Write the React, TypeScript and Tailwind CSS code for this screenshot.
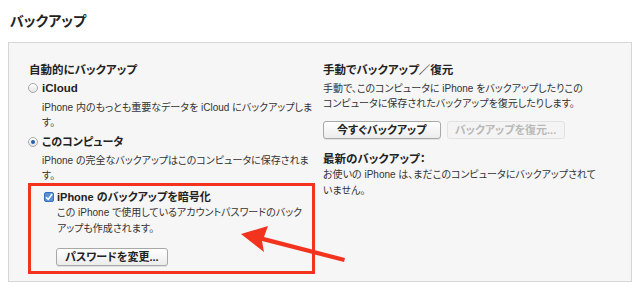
const jp = { fontFamily: '"Liberation Sans", "Noto Sans CJK JP", sans-serif' };

function Radio({ checked }: { checked?: boolean }) {
  return (
    <span className="inline-flex h-[10px] w-[10px] items-center justify-center rounded-full border border-[#a9a9a9] bg-gradient-to-b from-white to-[#e4e4e4]">
      {checked && <span className="h-[4px] w-[4px] rounded-full bg-[#2a5db0]" />}
    </span>
  );
}

function Button({ children, disabled, tight }: { children: React.ReactNode; disabled?: boolean; tight?: boolean }) {
  if (disabled) {
    return (
      <button className="h-[18px] w-[118px] rounded-[3px] border border-[#e2e2e2] bg-[#f4f4f4] text-[11px] font-bold text-[#b9b9b9]">
        {children}
      </button>
    );
  }
  return (
    <button
      className={
        (tight ? "px-[8px] " : "px-[13px] ") +
        "h-[18px] rounded-[3px] border border-[#a8a8a8] bg-gradient-to-b from-white to-[#ececec] text-[11px] font-bold text-[#222] shadow-[0_1px_0_rgba(0,0,0,0.08)]"
      }
    >
      {children}
    </button>
  );
}

export default function App() {
  return (
    <div
      className="relative h-[300px] w-[640px] overflow-hidden bg-white text-[#222] [font-feature-settings:'palt']"
      style={jp}
    >
      <h1 className="pl-[10px] pt-[12px] text-[14px] font-bold leading-[18px]">バックアップ</h1>

      <div className="mx-[8px] mt-[12px] grid h-[240px] grid-cols-[295px_1fr] border border-[#d6d6d6] bg-[#f6f6f6] pl-[19px] pt-[19px] whitespace-nowrap">
        {/* left column */}
        <div className="flex flex-col">
          <div className="pl-[1px] text-[11.5px] font-bold leading-[16px]">自動的にバックアップ</div>

          <div className="mt-[2px] flex items-center gap-[4px]">
            <Radio />
            <span className="text-[11.5px] font-bold leading-[16px]">iCloud</span>
          </div>
          <p className="pl-[14px] pt-[4px] text-[10px] leading-[15px] text-[#333]">
            iPhone 内のもっとも重要なデータを iCloud にバックアップしま
            <br />す。
          </p>

          <div className="mt-[4px] flex items-center gap-[4px]">
            <Radio checked />
            <span className="text-[11px] font-bold leading-[16px]">このコンピュータ</span>
          </div>
          <p className="pl-[14px] pt-[3px] text-[10px] leading-[15px] text-[#333]">
            iPhone の完全なバックアップはこのコンピュータに保存されま
            <br />す。
          </p>

          <div className="flex h-[91px] w-[287px] flex-col border-[3px] border-[#f2341f] pl-[13px] pt-[3px]">
            <div className="flex items-center gap-[3px]">
              <span className="flex h-[10px] w-[10px] items-center justify-center rounded-[2px] border border-[#3a6fb8] bg-[#5b8fd6]">
                <svg width="8" height="8" viewBox="0 0 8 8">
                  <path d="M1 4.2 L3.2 6.4 L7.2 1" fill="none" stroke="white" strokeWidth="1.6" />
                </svg>
              </span>
              <span className="text-[11px] font-bold leading-[16px]">iPhone のバックアップを暗号化</span>
            </div>
            <p className="pl-[13px] text-[10px] leading-[16px] text-[#333]">
              この iPhone で使用しているアカウントパスワードのバック
              <br />
              アップも作成されます。
            </p>
            <div className="pl-[12px] pt-[7px]">
              <Button tight>パスワードを変更...</Button>
            </div>
          </div>
        </div>

        {/* right column */}
        <div className="flex flex-col">
          <div className="text-[11.5px] font-bold leading-[16px]">手動でバックアップ／復元</div>
          <p className="pt-[3px] text-[10px] leading-[15px] text-[#333]">
            手動で、このコンピュータに iPhone をバックアップしたりこの
            <br />
            コンピュータに保存されたバックアップを復元したりします。
          </p>
          <div className="mt-[10px] flex gap-[6px]">
            <Button>今すぐバックアップ</Button>
            <Button disabled>バックアップを復元...</Button>
          </div>
          <div className="mt-[12px] text-[11.5px] font-bold leading-[16px]">最新のバックアップ：</div>
          <p className="text-[10px] leading-[16px] text-[#333]">
            お使いの iPhone は、まだこのコンピュータにバックアップされて
            <br />
            いません。
          </p>
        </div>
      </div>

      {/* annotation arrow */}
      <svg className="absolute left-0 top-0" width="640" height="300" viewBox="0 0 640 300">
        <path d="M344 262 L262 241 L264 252 L241 234 L268 226 L264 237 L345 258 Z" fill="#f2341f" />
      </svg>
    </div>
  );
}
